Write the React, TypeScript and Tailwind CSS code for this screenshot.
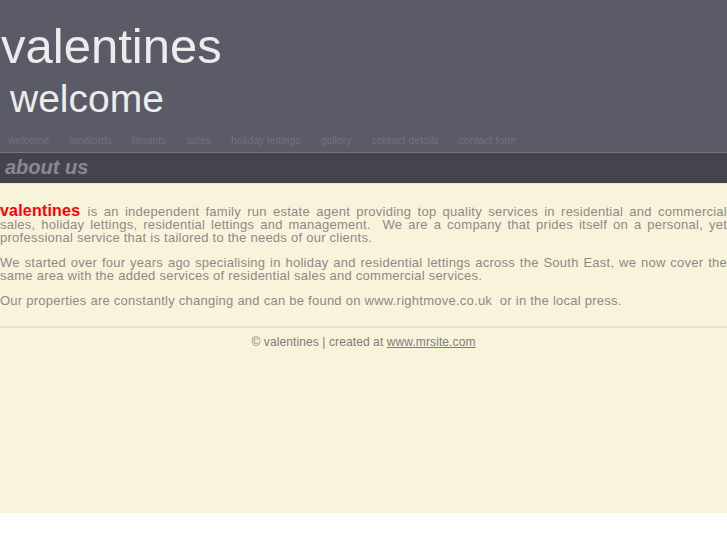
const NAV = [
  "welcome",
  "landlords",
  "tenants",
  "sales",
  "holiday lettings",
  "gallery",
  "contact details",
  "contact form",
];

export default function App() {
  return (
    <div className="w-[727px] bg-white font-['Liberation_Sans',Arial,sans-serif]">
      <header className="bg-[#5b5a67]">
        <h1 className="pl-[1px] pt-[18px] text-[49px] leading-[56px] text-[#ececec]">valentines</h1>
        <h2 className="pl-[10px] pt-[2px] text-[39px] leading-[46px] text-[#ececec]">welcome</h2>
        <nav className="flex gap-[20px] pl-2 pt-[12px] pb-[5px] text-[10.5px] leading-[13px] text-[#72717d]">
          {NAV.map((n) => (
            <a key={n} href="#">
              {n}
            </a>
          ))}
        </nav>
      </header>
      <div className="h-px bg-[#75747f]" />
      <div className="h-[30px] bg-[#45434e] pl-[5px] text-[20px] font-bold italic leading-[28px] text-[#8a8893]">
        about us
      </div>
      <main className="h-[330px] border-t border-[#e6e2da] bg-[#faf3dc] pt-[20px] text-[13px] leading-[13px] tracking-[0.25px] text-[#8c8a86]">
        <p className="text-justify">
          <span className="mr-[1px] text-[16px] font-bold tracking-[0.2px] text-[#ff0000]">valentines</span> is an
          independent family run estate agent providing top quality services in residential and commercial
          sales, holiday lettings, residential lettings and management.&nbsp; We are a company that prides itself
          on a personal, yet professional service that is tailored to the needs of our clients.
        </p>
        <p className="mt-[12px] text-justify">
          We started over four years ago specialising in holiday and residential lettings across the South East,
          we now cover the same area with the added services of residential sales and commercial services.
        </p>
        <p className="mt-[12px]">
          Our properties are constantly changing and can be found on www.rightmove.co.uk&nbsp; or in the local
          press.
        </p>
        <div className="mt-[19px] h-[2px] bg-[#e8e2d2]" />
        <p className="mt-[7px] text-center text-[12px] leading-[14px] tracking-[0.1px] text-[#7e7c78]">
          © valentines | created at{" "}
          <a href="#" className="underline">
            www.mrsite.com
          </a>
        </p>
      </main>
      <div className="h-[32px] bg-white" />
    </div>
  );
}
